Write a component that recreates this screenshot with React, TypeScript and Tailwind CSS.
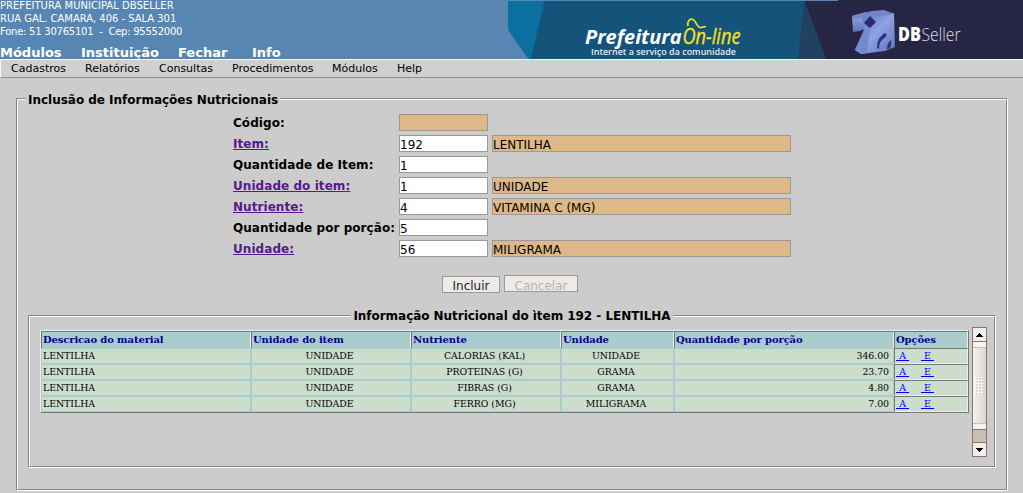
import React from "react";

const sans = "font-['DejaVu_Sans',sans-serif]";

const menus = [
  { label: "Módulos", cls: "w-[81px]" },
  { label: "Instituição", cls: "w-[97px]" },
  { label: "Fechar", cls: "w-[74px]" },
  { label: "Info", cls: "" },
];

const submenus = [
  { label: "Cadastros", cls: "w-[74px]" },
  { label: "Relatórios", cls: "w-[74px]" },
  { label: "Consultas", cls: "w-[73px]" },
  { label: "Procedimentos", cls: "w-[100px]" },
  { label: "Módulos", cls: "w-[65px]" },
  { label: "Help", cls: "" },
];

type FieldRow = { label: string; link?: boolean; value: string; locked?: boolean; text?: string };

const fields: FieldRow[] = [
  { label: "Código:", value: "", locked: true },
  { label: "Item:", link: true, value: "192", text: "LENTILHA" },
  { label: "Quantidade de Item:", value: "1" },
  { label: "Unidade do item:", link: true, value: "1", text: "UNIDADE" },
  { label: "Nutriente:", link: true, value: "4", text: "VITAMINA C (MG)" },
  { label: "Quantidade por porção:", value: "5" },
  { label: "Unidade:", link: true, value: "56", text: "MILIGRAMA" },
];

const headings = ["Descricao do material", "Unidade do item", "Nutriente", "Unidade", "Quantidade por porção", "Opções"];

const rows = [
  ["LENTILHA", "UNIDADE", "CALORIAS (KAL)", "UNIDADE", "346.00"],
  ["LENTILHA", "UNIDADE", "PROTEINAS (G)", "GRAMA", "23.70"],
  ["LENTILHA", "UNIDADE", "FIBRAS (G)", "GRAMA", "4.80"],
  ["LENTILHA", "UNIDADE", "FERRO (MG)", "MILIGRAMA", "7.00"],
];

const align = ["text-left", "text-center", "text-center", "text-center", "text-right"];

function Banner() {
  return (
    <svg width="515" height="59" viewBox="508 0 515 59" className="block shrink-0">
      <defs>
        <linearGradient id="cube" x1="0" y1="0" x2="1" y2="1">
          <stop offset="0" stopColor="#5265b8" />
          <stop offset="0.5" stopColor="#8ea3e2" />
          <stop offset="1" stopColor="#5c6fc0" />
        </linearGradient>
        <linearGradient id="side" x1="0" y1="0" x2="0" y2="1">
          <stop offset="0" stopColor="#a5b1dc" />
          <stop offset="1" stopColor="#5d70bd" />
        </linearGradient>
      </defs>
      <rect x="508" y="1" width="330" height="58" fill="#14547b" />
      <path d="M508 1H544.5L531 59H528.500L508 30Z" fill="#0b6f9f" />
      <path d="M508 30L528.500 59H508Z" fill="#5786b2" />
      <path d="M804 1L826 59H798Z" fill="#20415f" />
      <path d="M804.500 1H838V0H1023V59H826Z" fill="#262543" />
      <text x="585" y="44" fontFamily="Open Sans" fontStyle="italic" fontWeight="700" fontSize="20" fill="#fff" textLength="96.500" lengthAdjust="spacingAndGlyphs">Prefeitura</text>
      <text x="682.500" y="44" fontFamily="Open Sans" fontStyle="italic" fontSize="21" fill="#f6e11c" stroke="#f6e11c" strokeWidth="0.300" textLength="58" lengthAdjust="spacingAndGlyphs">On-line</text>
      <path d="M688 26C687 21 690 18 693 19.500S697 27 700 27.500S704 26 706 27" fill="none" stroke="#f6e11c" strokeWidth="1.600" />
      <text x="591" y="55" fontFamily="Open Sans" fontWeight="600" fontSize="9.500" fill="#e2edf3" textLength="145" lengthAdjust="spacingAndGlyphs">Internet a serviço da comunidade</text>
      <path d="M852 16L866 12L868 28L860 31L853 32Z" fill="url(#side)" />
      <path d="M862 14L894 13L895 47L885 51L861 54L855 50L864 30Z" fill="url(#cube)" />
      <path d="M852 16L872 11L884 10L895 14L867 18L853 19Z" fill="#7484ca" />
      <path d="M855 50L864 30L870 27L867 53L861 54Z" fill="#7589d2" />
      <path d="M870 16L876 22L870 28L864 23Z" fill="#2a2a6c" />
      <path d="M877 48Q877 37 885 33Q889 35 883 39Q879 42 879 49ZM887 49Q887 43 891 40Q892 45 889 49Z" fill="#2c357c" />
      <text x="898" y="41" fontFamily="Open Sans" fontWeight="800" fontSize="19" fill="#fff" textLength="23" lengthAdjust="spacingAndGlyphs">DB</text>
      <text x="921.500" y="41" fontFamily="Open Sans" fontWeight="300" fontSize="19" fill="#dedee9" textLength="39" lengthAdjust="spacingAndGlyphs">Seller</text>
    </svg>
  );
}

function Scrollbar() {
  return (
    <div className="flex h-[130px] w-[15px] flex-col border border-[#85776b] bg-[#c9beb4]">
      <div className="flex h-[13px] items-center justify-center bg-[#f1eeea]">
        <svg width="7" height="4"><path d="M3 0H4V1H5V2H6V3H7V4H0V3H1V2H2V1H3Z" fill="#000" /></svg>
      </div>
      <div className="flex h-[89px] flex-col border-y border-[#85776b] bg-linear-to-r from-[#f4f2ef] to-[#dbd5cd]">
        <div className="h-[6px] border-b border-[#c9c1b9] bg-[#f6f4f2]" />
        <div className="flex grow items-center justify-center">
          <svg width="9" height="18">
            {[0, 3, 6, 9, 12, 15].map((y) =>
              [0, 3, 6].map((x) => (
                <g key={`${x}-${y}`}>
                  <rect x={x} y={y} width="2" height="2" fill="#fff" />
                  <rect x={x + 1} y={y + 1} width="1" height="1" fill="#c5bbb1" />
                </g>
              ))
            )}
          </svg>
        </div>
        <div className="h-[6px] border-t border-[#c9c1b9] bg-[#f6f4f2]" />
      </div>
      <div className="h-[12px]" />
      <div className="flex grow items-center justify-center border-t border-[#85776b] bg-[#f1eeea]">
        <svg width="7" height="4"><path d="M0 0H7V1H6V2H5V3H4V4H3V3H2V2H1V1H0Z" fill="#000" /></svg>
      </div>
    </div>
  );
}

function DataTable() {
  return (
    <div className="h-[83px] w-[929px] border border-t-[#eeeeee] border-r-[#777777] border-b-[#777777] border-l-[#eeeeee] font-['DejaVu_Serif',serif] text-black">
      <div className="grid h-[17px] grid-cols-[210px_160px_150px_113px_220px_74px]">
        {headings.map((h) => (
          <div key={h} className="border border-t-[#667a7a] border-r-[#eeeeee] border-b-[#eeeeee] border-l-[#667a7a] bg-[#aacccc] pl-px text-[10px] leading-[16px] font-bold tracking-[-0.12px] whitespace-nowrap text-[#00008b]">
            {h}
          </div>
        ))}
      </div>
      {rows.map((r) => (
        <div key={r[2]} className="grid h-[16px] grid-cols-[210px_160px_150px_113px_220px_74px] text-[9.4px] leading-[14px] tracking-[-0.05px]">
          {r.map((c, i) => (
            <div key={i} className={`border border-[#aacccc] bg-[#ccddcc] pr-[4px] pl-px whitespace-nowrap ${align[i]}`}>{c}</div>
          ))}
          <div className="flex gap-[12px] border border-t-[#777777] border-r-[#eeeeee] border-b-[#eeeeee] border-l-[#777777] bg-[#ccddcc] pl-px text-[#0000ee]">
            <span className="h-[12px] w-[13px] border-b border-[#0000ee] text-center">A</span>
            <span className="h-[12px] w-[13px] border-b border-[#0000ee] text-center">E</span>
          </div>
        </div>
      ))}
    </div>
  );
}

export default function App() {
  return (
    <div className={`h-[493px] w-[1023px] overflow-hidden bg-[#cccccc] text-black ${sans}`}>
      <header className="flex h-[59px] justify-between bg-[#5786b2] text-white">
        <div className="flex flex-col whitespace-nowrap">
          <div className="h-[45px] text-[10px] leading-[13px]">
            <p className="-mt-px tracking-[0.02px]">PREFEITURA MUNICIPAL DBSELLER</p>
            <p className="tracking-[-0.03px]">RUA GAL. CAMARA, 406 - SALA 301</p>
            <p className="tracking-[-0.24px] whitespace-pre">Fone: 51 30765101  -  Cep: 95552000</p>
          </div>
          <nav className="flex h-[14px] text-[13px] leading-[16px] font-bold">
            {menus.map((m) => <span key={m.label} className={m.cls}>{m.label}</span>)}
          </nav>
        </div>
        <Banner />
      </header>
      <nav className="flex h-[19px] border-t border-b border-l border-t-[#f5f5f5] border-b-[#909090] border-l-[#f5f5f5] bg-[#d0d0d0] pl-[10px] text-[11px] leading-[17px] whitespace-nowrap">
        {submenus.map((m) => <span key={m.label} className={m.cls}>{m.label}</span>)}
      </nav>

      <main className="pt-[14px] pr-[15px] pl-[16px]">
        <section className="flex h-[399px] flex-col">
          <div className="flex h-[14px] items-center">
            <div className="mt-[6px] h-[8px] w-[10px] border-t border-l border-[#888888]"><div className="h-full border-t border-l border-white" /></div>
            <h1 className="px-[2px] pt-[2px] text-[12px] leading-[14px] font-bold tracking-[-0.02px] whitespace-nowrap">Inclusão de Informações Nutricionais</h1>
            <div className="mt-[6px] h-[8px] grow border-t border-r border-t-[#888888] border-r-white"><div className="h-full border-t border-r border-t-white border-r-[#888888]" /></div>
          </div>
          <div className="grow border-r border-b border-l border-r-white border-b-white border-l-[#888888]">
            <div className="h-full border-r border-b border-l border-r-[#888888] border-b-[#888888] border-l-white px-[10px] pt-[8px]">
              <div className="flex flex-col gap-[4px] pl-[205px] text-[12px]">
                {fields.map((f) => (
                  <div key={f.label} className="flex h-[17px] gap-[4px] whitespace-nowrap">
                    <div className="w-[162px] leading-[19px] font-bold tracking-[0.06px]">
                      {f.link ? <a className="text-[#551a8b] underline">{f.label}</a> : f.label}
                    </div>
                    <div className={`h-[17px] w-[89px] border border-[#999999] leading-[19px] ${f.locked ? "bg-[#deb887]" : "bg-white"}`}>{f.value}</div>
                    {f.text && <div className="h-[17px] w-[299px] border border-[#999999] bg-[#deb887] leading-[19px]">{f.text}</div>}
                  </div>
                ))}
              </div>
              <div className="mt-[18px] flex gap-[4px] pl-[414px] text-[12px] leading-[18px]">
                <div role="button" className="mt-px h-[17px] w-[58px] border border-[#999999] bg-[#eeebe7] text-center text-[#222222]">Incluir</div>
                <div role="button" className="h-[17px] w-[74px] border border-[#999999] bg-[#eeebe7] pt-px text-center text-[#b5b2ae]">Cancelar</div>
              </div>

              <section className="mt-[15px] flex h-[160px] w-[968px] flex-col">
                <div className="flex h-[15px] items-center">
                  <div className="mt-[7px] h-[8px] grow border-t border-l border-[#888888]"><div className="h-full border-t border-l border-white" /></div>
                  <h2 className="px-[2px] pt-[2px] text-[12px] leading-[15px] font-bold tracking-[-0.04px] whitespace-nowrap">Informação Nutricional do ìtem 192 - LENTILHA</h2>
                  <div className="mt-[7px] h-[8px] grow border-t border-r border-t-[#888888] border-r-white"><div className="h-full border-t border-r border-t-white border-r-[#888888]" /></div>
                </div>
                <div className="grow border-r border-b border-l border-r-white border-b-white border-l-[#888888]">
                  <div className="flex h-full gap-[3px] border-r border-b border-l border-r-[#888888] border-b-[#888888] border-l-white pt-[4px] pl-[10px]">
                    <div className="pt-[3px]"><DataTable /></div>
                    <Scrollbar />
                  </div>
                </div>
              </section>
            </div>
          </div>
        </section>
      </main>
    </div>
  );
}
